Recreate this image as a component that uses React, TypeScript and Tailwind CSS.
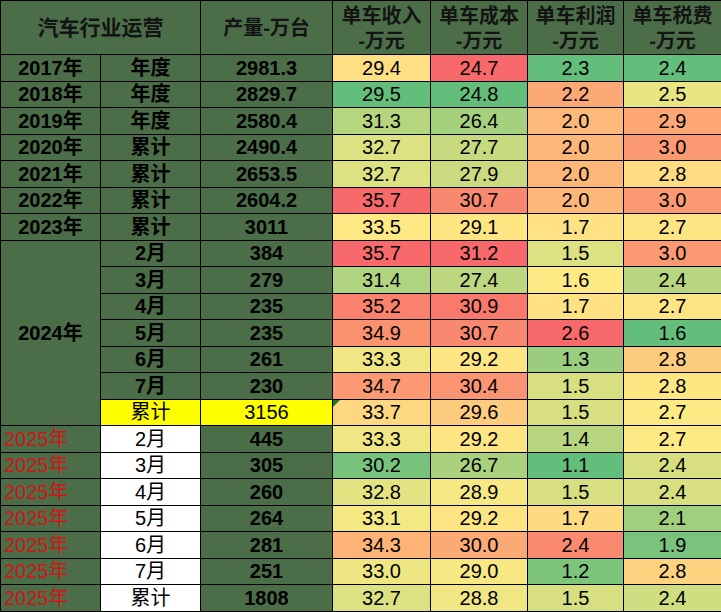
import React from "react";

type Cell = [string, string];

const G = "bg-[#4b6e48]";

const rows: {
  year?: string;
  yearSpan?: number;
  label: string;
  qty: string;
  kind: "hist" | "y24" | "sum24" | "y25";
  cells: Cell[];
}[] = [
  { year: "2017年", label: "年度", qty: "2981.3", kind: "hist", cells: [["29.4", "#fedf83"], ["24.7", "#f8696b"], ["2.3", "#63be7b"], ["2.4", "#63be7b"]] },
  { year: "2018年", label: "年度", qty: "2829.7", kind: "hist", cells: [["29.5", "#63be7b"], ["24.8", "#63be7b"], ["2.2", "#fca975"], ["2.5", "#e8e583"]] },
  { year: "2019年", label: "年度", qty: "2580.4", kind: "hist", cells: [["31.3", "#b5d57f"], ["26.4", "#a5d07e"], ["2.0", "#fdb979"], ["2.9", "#fca775"]] },
  { year: "2020年", label: "累计", qty: "2490.4", kind: "hist", cells: [["32.7", "#dce182"], ["27.7", "#c8da80"], ["2.0", "#fdb779"], ["3.0", "#fb9a72"]] },
  { year: "2021年", label: "累计", qty: "2653.5", kind: "hist", cells: [["32.7", "#dce182"], ["27.9", "#cbda80"], ["2.0", "#fdb779"], ["2.8", "#fedc81"]] },
  { year: "2022年", label: "累计", qty: "2604.2", kind: "hist", cells: [["35.7", "#f8696b"], ["30.7", "#f98870"], ["2.0", "#fdb779"], ["3.0", "#fb9a72"]] },
  { year: "2023年", label: "累计", qty: "3011", kind: "hist", cells: [["33.5", "#fee883"], ["29.1", "#fee683"], ["1.7", "#fee283"], ["2.7", "#fee583"]] },
  { year: "2024年", yearSpan: 7, label: "2月", qty: "384", kind: "y24", cells: [["35.7", "#f8696b"], ["31.2", "#f8696b"], ["1.5", "#dce182"], ["3.0", "#fb9a72"]] },
  { label: "3月", qty: "279", kind: "y24", cells: [["31.4", "#b0d47f"], ["27.4", "#bcd780"], ["1.6", "#feea84"], ["2.4", "#b8d67f"]] },
  { label: "4月", qty: "235", kind: "y24", cells: [["35.2", "#f9816e"], ["30.9", "#f97a6d"], ["1.7", "#fee283"], ["2.7", "#fee583"]] },
  { label: "5月", qty: "235", kind: "y24", cells: [["34.9", "#fa916f"], ["30.7", "#f98870"], ["2.6", "#f8696b"], ["1.6", "#63be7b"]] },
  { label: "6月", qty: "261", kind: "y24", cells: [["33.3", "#f0e683"], ["29.2", "#fee583"], ["1.3", "#9acd7e"], ["2.8", "#fdcb7d"]] },
  { label: "7月", qty: "230", kind: "y24", cells: [["34.7", "#fb9a72"], ["30.4", "#fa9472"], ["1.5", "#d7df81"], ["2.8", "#fee683"]] },
  { label: "累计", qty: "3156", kind: "sum24", cells: [["33.7", "#fed880"], ["29.6", "#fdcb7d"], ["1.5", "#d7df81"], ["2.7", "#feea84"]] },
  { year: "2025年", label: "2月", qty: "445", kind: "y25", cells: [["33.3", "#f0e683"], ["29.2", "#fee583"], ["1.4", "#b8d67f"], ["2.7", "#feea84"]] },
  { year: "2025年", label: "3月", qty: "305", kind: "y25", cells: [["30.2", "#77c37c"], ["26.7", "#a9d17e"], ["1.1", "#63be7b"], ["2.4", "#d7df81"]] },
  { year: "2025年", label: "4月", qty: "260", kind: "y25", cells: [["32.8", "#e4e382"], ["28.9", "#f8e883"], ["1.5", "#d7df81"], ["2.4", "#d7df81"]] },
  { year: "2025年", label: "5月", qty: "264", kind: "y25", cells: [["33.1", "#f4e883"], ["29.2", "#fee583"], ["1.7", "#fedb81"], ["2.1", "#a0cf7e"]] },
  { year: "2025年", label: "6月", qty: "281", kind: "y25", cells: [["34.3", "#fdb276"], ["30.0", "#fbaa75"], ["2.4", "#f98a70"], ["1.9", "#79c37c"]] },
  { year: "2025年", label: "7月", qty: "251", kind: "y25", cells: [["33.0", "#ede683"], ["29.0", "#f8e883"], ["1.2", "#7ec57c"], ["2.8", "#fed380"]] },
  { year: "2025年", label: "累计", qty: "1808", kind: "y25", cells: [["32.7", "#dce182"], ["28.8", "#f0e683"], ["1.5", "#d7df81"], ["2.4", "#d0dd81"]] },
];

const heads = ["单车收入", "单车成本", "单车利润", "单车税费"];

export default function App() {
  return (
    <div className="w-[721px] h-[612px] bg-[#2d3e2c] overflow-hidden font-['Liberation_Sans','Noto_Sans_CJK_SC',sans-serif] text-[20px] leading-none text-black">
      <table className="w-[721px] table-fixed border-collapse">
        <colgroup>
          <col className="w-[100px]" />
          <col className="w-[100px]" />
          <col className="w-[132px]" />
          <col className="w-[98px]" />
          <col className="w-[97px]" />
          <col className="w-[96px]" />
          <col className="w-[98px]" />
        </colgroup>
        <thead>
          <tr className="h-[53px]">
            <th colSpan={2} className={`${G} border border-black text-[21px] font-bold text-center text-[#141414]`}>汽车行业运营</th>
            <th className={`${G} border border-black text-[20px] font-bold text-center text-[#141414]`}>产量-万台</th>
            {heads.map((h) => (
              <th key={h} className={`${G} border border-black text-[20px] font-bold text-center leading-[25px] pt-[3px] text-[#141414]`}>
                <div>{h}</div>
                <div>-万元</div>
              </th>
            ))}
          </tr>
        </thead>
        <tbody>
          {rows.map((r, i) => (
            <tr key={i} className="h-[26.5px]">
              {r.kind === "y25" ? (
                <td className={`${G} border border-black text-left pl-[3px] text-[#d01515]`}>{r.year}</td>
              ) : r.year ? (
                <td rowSpan={r.yearSpan} className={`${G} border border-black text-center font-bold`}>{r.year}</td>
              ) : null}
              <td
                className={`border border-black text-center ${
                  r.kind === "sum24" ? "bg-[#ffff00]" : r.kind === "y25" ? "bg-white" : `${G} font-bold`
                }`}
              >
                {r.label}
              </td>
              <td className={`border border-black text-center ${r.kind === "sum24" ? "bg-[#ffff00]" : `${G} font-bold`}`}>
                {r.qty}
              </td>
              {r.cells.map(([v, c], j) => (
                <td key={j} className="relative border border-black text-center" style={{ backgroundColor: c }}>
                  {r.kind === "sum24" && j === 0 && (
                    <span className="absolute left-0 top-0 w-0 h-0 border-t-[7px] border-r-[7px] border-t-[#1e7b1e] border-r-transparent" />
                  )}
                  {v}
                </td>
              ))}
            </tr>
          ))}
        </tbody>
      </table>
    </div>
  );
}
